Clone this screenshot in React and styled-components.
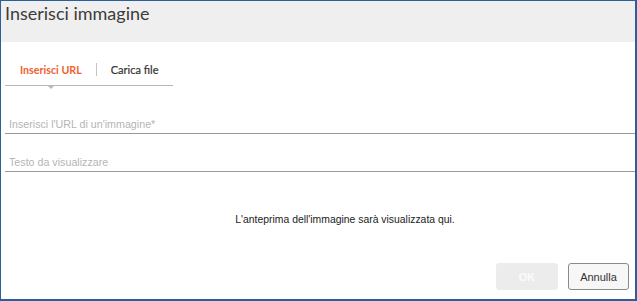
import styled, { createGlobalStyle } from "styled-components";

const Global = createGlobalStyle`
  html, body { margin: 0; padding: 0; background: #fff; }
  * { box-sizing: border-box; }
`;

const App = () => {
  return (
    <>
      <Global />
      <Dialog>
        <Header>
          <Title>Inserisci immagine</Title>
        </Header>
        <Body>
          <Tabs>
            <Tab $active>Inserisci URL</Tab>
            <Divider />
            <Tab>Carica file</Tab>
          </Tabs>
          <Field $gap={29}>
            <Input placeholder="Inserisci l'URL di un'immagine*" />
          </Field>
          <Field $gap={19}>
            <Input placeholder="Testo da visualizzare" />
          </Field>
          <Preview>L'anteprima dell'immagine sarà visualizzata qui.</Preview>
        </Body>
        <Footer>
          <Button $primary disabled>
            OK
          </Button>
          <Button>Annulla</Button>
        </Footer>
      </Dialog>
    </>
  );
};

const Dialog = styled.div`
  width: 637px;
  height: 301px;
  display: flex;
  flex-direction: column;
  border: solid #2a5f9b;
  border-width: 1px 2px 2px 1px;
  background: #fff;
  overflow: hidden;
`;
const Header = styled.div`
  height: 41px;
  background: #efefef;
  padding: 1px 4px 0;
`;
const Title = styled.h1`
  margin: 0;
  font-family: Lato, "Open Sans", sans-serif;
  font-weight: 400;
  font-size: 18px;
  color: #3c3c3c;
`;
const Body = styled.div`
  flex: 1;
  display: flex;
  flex-direction: column;
  padding: 0 0 0 4px;
`;
const Tabs = styled.div`
  position: relative;
  width: 168px;
  height: 44px;
  display: flex;
  align-items: center;
  padding-left: 15px;
  padding-top: 11px;
  border-bottom: 1px solid #b8b8b8;
  &::after {
    content: "";
    position: absolute;
    left: 43px;
    bottom: -4px;
    border: 3px solid transparent;
    border-top-color: #b8b8b8;
    border-bottom: 0;
  }
`;
const Tab = styled.span`
  font-family: Lato, "Open Sans", sans-serif;
  font-size: ${(p) => (p.$active ? "10.7px" : "11px")};
  font-weight: ${(p) => (p.$active ? 700 : 400)};
  color: ${(p) => (p.$active ? "#f0612f" : "#333")};
  -webkit-text-stroke: ${(p) => (p.$active ? "0" : "0.2px #333")};
`;
const Divider = styled.span`
  width: 1px;
  height: 13px;
  background: #c4c4c4;
  margin: 0 14px 0 14px;
`;
const Field = styled.div`
  margin-top: ${(p) => p.$gap}px;
  border-bottom: 1px solid #9a9a9a;
`;
const Input = styled.input`
  display: block;
  width: 100%;
  border: 0;
  outline: 0;
  padding: 0 0 0 4px;
  height: 18px;
  font-family: "Liberation Sans", Arial, sans-serif;
  font-size: 10.7px;
  background: transparent;
  &::placeholder {
    color: #b5b5b5;
  }
`;
const Preview = styled.div`
  margin-top: 42px;
  text-align: center;
  font-family: "Liberation Sans", Arial, sans-serif;
  font-size: 10.4px;
  color: #222;
  padding-left: 50px;
`;
const Footer = styled.div`
  display: flex;
  justify-content: flex-end;
  gap: 10px;
  padding: 0 6px 9px 0;
`;
const Button = styled.button`
  width: ${(p) => (p.$primary ? "62px" : "61px")};
  height: 27px;
  border-radius: 3px;
  border: 1px solid ${(p) => (p.$primary ? "#ececec" : "#8a8a8a")};
  background: ${(p) => (p.$primary ? "#ececec" : "#f7f7f7")};
  color: ${(p) => (p.$primary ? "#fbfbfb" : "#333")};
  font-family: "Liberation Sans", Arial, sans-serif;
  font-size: 11px;
  font-weight: ${(p) => (p.$primary ? 700 : 400)};
  padding: 0;
`;

export default App;
